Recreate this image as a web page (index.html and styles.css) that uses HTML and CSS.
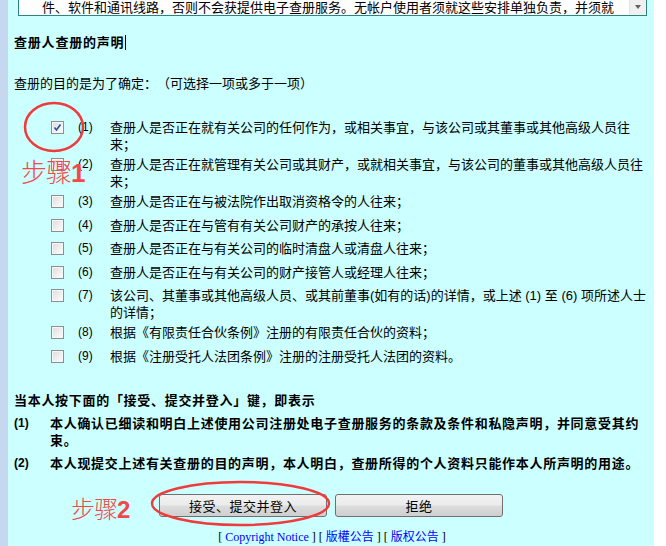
FILE: index.html
```html
<!DOCTYPE html>
<html lang="zh-CN">
<head>
<meta charset="utf-8">
<title>查册人查册的声明</title>
<link rel="stylesheet" href="styles.css">
</head>
<body>
<div class="page">
  <div class="strip"></div>
  <div class="main">
    <div class="textarea">
      <div class="ta-text">件、软件和通讯线路，否则不会获提供电子查册服务。无帐户使用者须就这些安排单独负责，并须就</div>
      <div class="ta-scroll"><span class="ta-arrow"></span></div>
    </div>

    <h2 class="heading">查册人查册的声明<span class="caret"></span></h2>

    <p class="purpose">查册的目的是为了确定：（可选择一项或多于一项）</p>

    <div class="items">
      <div class="item">
        <span class="cb checked"><svg viewBox="0 0 13 13" width="13" height="13"><path d="M3.5 6.5 L5.5 9 L9.5 3.5" fill="none" stroke="#2b4fa8" stroke-width="1.6"/></svg></span>
        <span class="num">(1)</span>
        <span class="txt">查册人是否正在就有关公司的任何作为，或相关事宜，与该公司或其董事或其他高级人员往来；</span>
      </div>
      <div class="item">
        <span class="cb"></span>
        <span class="num">(2)</span>
        <span class="txt">查册人是否正在就管理有关公司或其财产，或就相关事宜，与该公司的董事或其他高级人员往来；</span>
      </div>
      <div class="item">
        <span class="cb"></span>
        <span class="num">(3)</span>
        <span class="txt">查册人是否正在与被法院作出取消资格令的人往来；</span>
      </div>
      <div class="item">
        <span class="cb"></span>
        <span class="num">(4)</span>
        <span class="txt">查册人是否正在与管有有关公司财产的承按人往来；</span>
      </div>
      <div class="item">
        <span class="cb"></span>
        <span class="num">(5)</span>
        <span class="txt">查册人是否正在与有关公司的临时清盘人或清盘人往来；</span>
      </div>
      <div class="item">
        <span class="cb"></span>
        <span class="num">(6)</span>
        <span class="txt">查册人是否正在与有关公司的财产接管人或经理人往来；</span>
      </div>
      <div class="item">
        <span class="cb"></span>
        <span class="num">(7)</span>
        <span class="txt">该公司、其董事或其他高级人员、或其前董事(如有的话)的详情，或上述 (1) 至 (6) 项所述人士的详情；</span>
      </div>
      <div class="item">
        <span class="cb"></span>
        <span class="num">(8)</span>
        <span class="txt">根据《有限责任合伙条例》注册的有限责任合伙的资料；</span>
      </div>
      <div class="item">
        <span class="cb"></span>
        <span class="num">(9)</span>
        <span class="txt">根据《注册受托人法团条例》注册的注册受托人法团的资料。</span>
      </div>
    </div>

    <p class="intro">当本人按下面的「接受、提交并登入」键，即表示</p>
    <div class="decl"><span class="dn">(1)</span><span class="dt">本人确认已细读和明白上述使用公司注册处电子查册服务的条款及条件和私隐声明，并同意受其约束。</span></div>
    <div class="decl"><span class="dn">(2)</span><span class="dt">本人现提交上述有关查册的目的声明，本人明白，查册所得的个人资料只能作本人所声明的用途。</span></div>

    <div class="buttons">
      <button class="btn" type="button">接受、提交并登入</button>
      <button class="btn" type="button">拒绝</button>
    </div>

    <div class="links">[ <a href="#">Copyright Notice</a> ] [ <a href="#">版權公告</a> ] [ <a href="#">版权公告</a> ]</div>
  </div>
  <div class="rest"></div>

  <svg class="marks" width="666" height="546" viewBox="0 0 666 546">
    <ellipse cx="54" cy="127" rx="29" ry="24" fill="none" stroke="#ee3b3b" stroke-width="2.5"/>
    <ellipse cx="240.5" cy="503.5" rx="88.5" ry="21.5" fill="none" stroke="#ee3b3b" stroke-width="2.5"/>
  </svg>
  <div class="step step1">步骤<b>1</b></div>
  <div class="step step2">步骤<b>2</b></div>
</div>
</body>
</html>
```

FILE: styles.css
```css
* { box-sizing: border-box; }

html, body {
  margin: 0;
  padding: 0;
  background: #ffffff;
}

body {
  font-family: "Liberation Sans", "Noto Sans CJK SC", sans-serif;
  font-size: 13px;
  line-height: 17px;
  color: #000;
  text-spacing-trim: space-all;
}

.page {
  position: relative;
  display: flex;
  width: 666px;
  height: 546px;
  overflow: hidden;
}

.strip {
  width: 8px;
  flex: none;
  background: #c5d8ef;
}

.main {
  width: 646px;
  flex: none;
  background: #ccffff;
  padding-left: 6px;
}

.rest {
  flex: 1;
  background: #ffffff;
}

/* scrolled textarea at top */
.textarea {
  display: flex;
  margin-left: 4px;
  width: 629px;
  height: 16px;
  background: #ffffff;
  border: 1px solid #2c8585;
  border-top: none;
}

.ta-text {
  flex: 1;
  padding-left: 23px;
  line-height: 15px;
  white-space: nowrap;
  overflow: hidden;
}

.ta-scroll {
  width: 17px;
  flex: none;
  background: #f0f0f0;
  border-left: 1px solid #e4e4e4;
  display: flex;
  justify-content: center;
  padding-top: 5px;
}

.ta-arrow {
  width: 0;
  height: 0;
  border-left: 3.5px solid transparent;
  border-right: 3.5px solid transparent;
  border-top: 4px solid #606060;
}

.heading {
  margin: 18px 0 0;
  font-size: 13px;
  line-height: 17px;
  font-weight: bold;
  letter-spacing: 0.8px;
}

.caret {
  display: inline-block;
  width: 1px;
  height: 15px;
  background: #000;
  vertical-align: -3px;
  margin-left: 1px;
}

.purpose {
  margin: 24px 0 0;
}

.items {
  margin-top: 24px;
}

.item {
  display: flex;
  align-items: flex-start;
  min-height: 23.5px;
}

.cb {
  flex: none;
  width: 13px;
  height: 13px;
  margin: 5px 0 0 37px;
  border: 1px solid #8e8e8e;
  background: linear-gradient(135deg, #dcdcdc 0%, #f4f4f4 70%, #fbfbfb 100%);
  box-shadow: inset 0 0 0 1px #f7f7f7;
  position: relative;
}

.cb.checked svg {
  position: absolute;
  left: -1px;
  top: -1px;
}

.num {
  flex: none;
  width: 32px;
  margin-left: 14px;
  padding-top: 3px;
  font-size: 12px;
}

.txt {
  width: 540px;
  padding-top: 3px;
}

.intro {
  margin: 23.5px 0 0;
  font-weight: bold;
  letter-spacing: 0.7px;
}

.decl {
  display: flex;
  margin-top: 6px;
  font-weight: bold;
}

.dn {
  flex: none;
  width: 36px;
  font-size: 12px;
}

.dt {
  width: 596px;
  letter-spacing: 0.7px;
}

.buttons {
  display: flex;
  justify-content: center;
  gap: 8px;
  margin-top: 22px;
  padding-right: 6px;
}

.btn {
  width: 168px;
  height: 23px;
  padding: 0;
  border: 1px solid #707070;
  border-radius: 3px;
  background: linear-gradient(#f2f2f2 0%, #ebebeb 48%, #dddddd 52%, #cfcfcf 100%);
  font-family: "Liberation Sans", "Noto Sans CJK SC", sans-serif;
  font-size: 13px;
  color: #000;
  letter-spacing: 0.5px;
}

.links {
  margin-top: 13px;
  padding-right: 4px;
  text-align: center;
  font-family: "Liberation Serif", "Noto Sans CJK SC", serif;
  font-size: 12px;
  line-height: 14px;
}

.links a {
  color: #0000ff;
  text-decoration: none;
}

/* red annotations drawn over the page */
.marks {
  position: absolute;
  left: 0;
  top: 0;
  pointer-events: none;
}

.step {
  position: absolute;
  color: #f24848;
  font-family: "Noto Sans CJK SC", sans-serif;
  font-weight: 300;
  white-space: nowrap;
  letter-spacing: -1px;
}

.step b {
  font-family: "Liberation Sans", sans-serif;
  font-weight: bold;
  letter-spacing: 0;
}

.step1 {
  left: 21px;
  top: 156px;
  font-size: 26px;
  line-height: 30px;
}

.step2 {
  left: 71px;
  top: 494px;
  font-size: 24px;
  line-height: 28px;
}
```
